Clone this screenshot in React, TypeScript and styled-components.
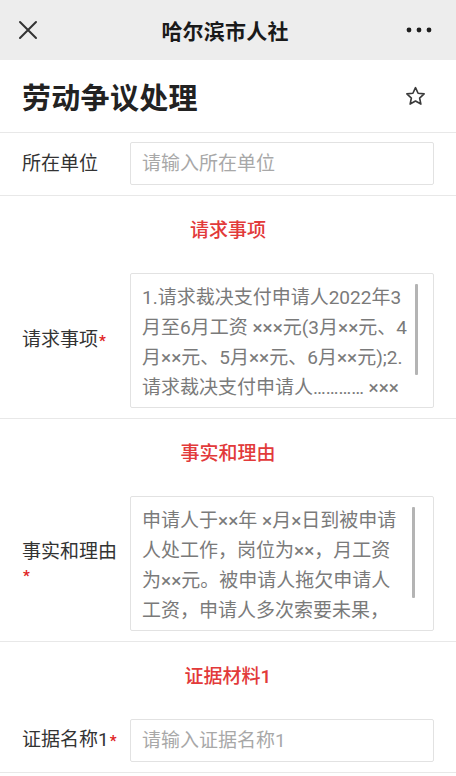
import React from "react";
import styled, { createGlobalStyle } from "styled-components";

const GlobalStyle = createGlobalStyle`
  html, body { margin: 0; padding: 0; background: #ffffff; }
  body {
    font-family: Roboto, "Noto Sans CJK SC", "Noto Sans", sans-serif;
    -webkit-font-smoothing: antialiased;
  }
  * { box-sizing: border-box; }
`;

const Page = styled.div`
  width: 456px;
  min-height: 776px;
  background: #ffffff;
  overflow: hidden;
`;

const NavBar = styled.header`
  height: 60px;
  background: #ededed;
  display: grid;
  grid-template-columns: 80px 1fr 80px;
  align-items: center;
  padding: 0 24px 0 18px;
`;

const NavTitle = styled.div`
  text-align: center;
  font-size: 21px;
  font-weight: 600;
  color: #1a1a1a;
  letter-spacing: 0.2px;
`;

const NavIconBtn = styled.button<{ $align: "start" | "end" }>`
  border: 0;
  background: transparent;
  padding: 0;
  display: flex;
  justify-content: ${(p) => (p.$align === "start" ? "flex-start" : "flex-end")};
  align-items: center;
  cursor: pointer;
`;

const TitleRow = styled.div`
  height: 73px;
  display: flex;
  align-items: center;
  justify-content: space-between;
  padding: 0 29px 0 22px;
  border-bottom: 1px solid #e8e8e8;
`;

const PageTitle = styled.h1`
  margin: 0;
  font-size: 29px;
  font-weight: 700;
  color: #222222;
  letter-spacing: 0.3px;
`;

const FieldRow = styled.div`
  display: flex;
  align-items: center;
  padding: 9px 22px 10px 22px;
  border-bottom: 1px solid #e8e8e8;
`;

const Label = styled.label`
  width: 100px;
  margin-right: 8px;
  flex-shrink: 0;
  font-size: 19px;
  line-height: 23px;
  color: #333333;
`;

const Req = styled.span`
  color: #e02424;
  font-size: 15px;
  font-weight: 700;
  margin-left: 1px;
`;

const TextInput = styled.input`
  flex: 1;
  height: 43px;
  border: 1px solid #e2e2e2;
  border-radius: 2px;
  padding: 0 11px;
  font-family: inherit;
  font-size: 19px;
  color: #555;
  background: #fff;
  outline: none;
  &::placeholder { color: #a8a8a8; }
`;

const SectionHeader = styled.div`
  height: 68px;
  padding-top: 23px;
  text-align: center;
  font-size: 19px;
  line-height: 24px;
  color: #e23a3a;
  font-weight: 500;
`;

const Section = styled.section``;

const AreaBox = styled.div`
  position: relative;
  flex: 1;
  height: 135px;
  border: 1px solid #e2e2e2;
  border-radius: 2px;
  padding: 9px 0 0 11px;
  overflow: hidden;
  background: #fff;
`;

const AreaLine = styled.div`
  font-size: 19px;
  line-height: 30px;
  color: #7a7a7a;
  white-space: nowrap;
`;

const ScrollThumb = styled.div<{ $right: number }>`
  position: absolute;
  top: 10px;
  right: ${(p) => p.$right}px;
  width: 3px;
  height: 91px;
  background: #b4b4b4;
  border-radius: 1px;
`;

const CloseIcon = () => (
  <svg width="20" height="20" viewBox="0 0 20 20" fill="none">
    <path d="M2 2 L18 18 M18 2 L2 18" stroke="#333" strokeWidth="2" strokeLinecap="round" />
  </svg>
);

const MoreIcon = () => (
  <svg width="26" height="6" viewBox="0 0 26 6">
    <circle cx="3" cy="3" r="2.4" fill="#1f1f1f" />
    <circle cx="13" cy="3" r="2.4" fill="#1f1f1f" />
    <circle cx="23" cy="3" r="2.4" fill="#1f1f1f" />
  </svg>
);

const StarIcon = () => (
  <svg width="23" height="23" viewBox="0 0 24 24" fill="none">
    <path
      d="M12 2.8 L14.7 8.6 L21 9.3 L16.3 13.6 L17.6 19.9 L12 16.7 L6.4 19.9 L7.7 13.6 L3 9.3 L9.3 8.6 Z"
      stroke="#3a3a3a"
      strokeWidth="1.7"
      strokeLinejoin="round"
    />
  </svg>
);

const requestLines = [
  "1.请求裁决支付申请人2022年3",
  "月至6月工资 ×××元(3月××元、4",
  "月××元、5月××元、6月××元);2.",
  "请求裁决支付申请人………… ×××",
];

const factLines = [
  "申请人于××年 ×月×日到被申请",
  "人处工作，岗位为××，月工资",
  "为××元。被申请人拖欠申请人",
  "工资，申请人多次索要未果，",
];

export default function App() {
  return (
    <>
      <GlobalStyle />
      <Page>
        <NavBar>
          <NavIconBtn $align="start" aria-label="关闭">
            <CloseIcon />
          </NavIconBtn>
          <NavTitle>哈尔滨市人社</NavTitle>
          <NavIconBtn $align="end" aria-label="更多">
            <MoreIcon />
          </NavIconBtn>
        </NavBar>

        <TitleRow>
          <PageTitle>劳动争议处理</PageTitle>
          <StarIcon />
        </TitleRow>

        <FieldRow>
          <Label>所在单位</Label>
          <TextInput placeholder="请输入所在单位" />
        </FieldRow>

        <Section>
          <SectionHeader>请求事项</SectionHeader>
          <FieldRow>
            <Label>
              请求事项<Req>*</Req>
            </Label>
            <AreaBox role="textbox" aria-multiline="true">
              {requestLines.map((l, i) => (
                <AreaLine key={i}>{l}</AreaLine>
              ))}
              <ScrollThumb $right={15} />
            </AreaBox>
          </FieldRow>
        </Section>

        <Section>
          <SectionHeader>事实和理由</SectionHeader>
          <FieldRow>
            <Label>
              事实和理由<Req>*</Req>
            </Label>
            <AreaBox role="textbox" aria-multiline="true">
              {factLines.map((l, i) => (
                <AreaLine key={i}>{l}</AreaLine>
              ))}
              <ScrollThumb $right={18} />
            </AreaBox>
          </FieldRow>
        </Section>

        <Section>
          <SectionHeader>证据材料1</SectionHeader>
          <FieldRow>
            <Label>
              证据名称1<Req>*</Req>
            </Label>
            <TextInput placeholder="请输入证据名称1" />
          </FieldRow>
        </Section>
      </Page>
    </>
  );
}
